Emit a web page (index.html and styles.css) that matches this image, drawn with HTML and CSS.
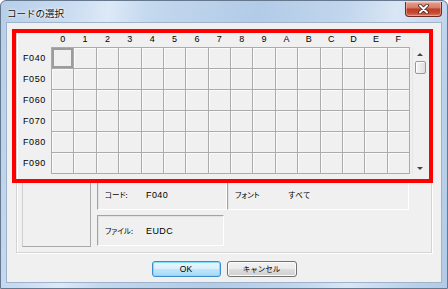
FILE: index.html
```html
<!DOCTYPE html>
<html lang="ja">
<head>
  <meta charset="UTF-8">
  <title>コードの選択</title>
  <link rel="stylesheet" href="styles.css">
</head>
<body>
  <div class="window">
    <div class="titlebar">
      <span class="title">コードの選択</span>
      <button class="close" aria-label="閉じる">
        <svg width="13" height="10" viewBox="0 0 13 10">
          <path d="M3 1.5 L10 8.5 M10 1.5 L3 8.5" stroke="#4a1e18" stroke-width="3.6" stroke-linecap="round"/>
          <path d="M3 1.5 L10 8.5 M10 1.5 L3 8.5" stroke="#fff" stroke-width="2" stroke-linecap="round"/>
        </svg>
      </button>
    </div>

    <div class="client">
      <div class="group">
        <div class="map">
          <div class="labels">
            <div>F040</div>
            <div>F050</div>
            <div>F060</div>
            <div>F070</div>
            <div>F080</div>
            <div>F090</div>
          </div>
          <div class="board">
            <div class="heads">
              <span>0</span><span>1</span><span>2</span><span>3</span>
              <span>4</span><span>5</span><span>6</span><span>7</span>
              <span>8</span><span>9</span><span>A</span><span>B</span>
              <span>C</span><span>D</span><span>E</span><span>F</span>
            </div>
            <div class="cells">
              <span class="cell selected"></span><span class="cell"></span><span class="cell"></span><span class="cell"></span><span class="cell"></span><span class="cell"></span><span class="cell"></span><span class="cell"></span><span class="cell"></span><span class="cell"></span><span class="cell"></span><span class="cell"></span><span class="cell"></span><span class="cell"></span><span class="cell"></span><span class="cell"></span>
              <span class="cell"></span><span class="cell"></span><span class="cell"></span><span class="cell"></span><span class="cell"></span><span class="cell"></span><span class="cell"></span><span class="cell"></span><span class="cell"></span><span class="cell"></span><span class="cell"></span><span class="cell"></span><span class="cell"></span><span class="cell"></span><span class="cell"></span><span class="cell"></span>
              <span class="cell"></span><span class="cell"></span><span class="cell"></span><span class="cell"></span><span class="cell"></span><span class="cell"></span><span class="cell"></span><span class="cell"></span><span class="cell"></span><span class="cell"></span><span class="cell"></span><span class="cell"></span><span class="cell"></span><span class="cell"></span><span class="cell"></span><span class="cell"></span>
              <span class="cell"></span><span class="cell"></span><span class="cell"></span><span class="cell"></span><span class="cell"></span><span class="cell"></span><span class="cell"></span><span class="cell"></span><span class="cell"></span><span class="cell"></span><span class="cell"></span><span class="cell"></span><span class="cell"></span><span class="cell"></span><span class="cell"></span><span class="cell"></span>
              <span class="cell"></span><span class="cell"></span><span class="cell"></span><span class="cell"></span><span class="cell"></span><span class="cell"></span><span class="cell"></span><span class="cell"></span><span class="cell"></span><span class="cell"></span><span class="cell"></span><span class="cell"></span><span class="cell"></span><span class="cell"></span><span class="cell"></span><span class="cell"></span>
              <span class="cell"></span><span class="cell"></span><span class="cell"></span><span class="cell"></span><span class="cell"></span><span class="cell"></span><span class="cell"></span><span class="cell"></span><span class="cell"></span><span class="cell"></span><span class="cell"></span><span class="cell"></span><span class="cell"></span><span class="cell"></span><span class="cell"></span><span class="cell"></span>
            </div>
          </div>
          <div class="scroll">
            <div class="arrow up"></div>
            <div class="thumb"></div>
            <div class="track"></div>
            <div class="arrow down"></div>
          </div>
        </div>

        <div class="info">
          <div class="preview"></div>
          <div class="fields">
            <div class="row">
              <div class="field code"><span class="key">コード:</span><span class="val">F040</span></div>
              <div class="field font"><span class="key wide">フォント</span><span class="val">すべて</span></div>
            </div>
            <div class="field file"><span class="key">ファイル:</span><span class="val">EUDC</span></div>
          </div>
        </div>
      </div>

      <div class="buttons">
        <button class="btn default">OK</button>
        <button class="btn cancel">キャンセル</button>
      </div>

      <!-- annotation frame drawn over the character grid -->
      <div class="highlight"></div>
    </div>
  </div>
</body>
</html>
```

FILE: styles.css
```css
* {
  box-sizing: border-box;
}
body {
  margin: 0;
  font-family: "Liberation Sans", "Noto Sans CJK JP", sans-serif;
  background-color: #fff;
  color: #000;
}
.window {
  width: 448px;
  height: 289px;
  display: flex;
  flex-direction: column;
  border: 1px solid #66788e;
  border-radius: 6px 6px 0 0;
  background: linear-gradient(100deg, #b6cee9 0%, #c9dcf1 14%, #dde9f7 22%, #c4d8ee 30%, #b2cbe7 52%, #c2d6ed 70%, #d9e6f5 80%, #bcd2eb 92%, #b2cae6 100%);
}
.titlebar {
  height: 21px;
  display: flex;
  align-items: flex-start;
  padding-left: 6px;
}
.title {
  font-family: "Noto Sans CJK JP", sans-serif;
  font-size: 9.5px;
  line-height: 20px;
  padding-top: 2px;
  color: #111;
  text-shadow: 0 0 4px #fff, 0 0 2px #fff;
}
.close {
  margin: 1px 5px 0 auto;
  width: 37px;
  height: 15px;
  padding: 0;
  border: 1px solid #6e2a20;
  border-top: none;
  border-radius: 0 0 4px 4px;
  background: linear-gradient(to bottom, #e3a091 0%, #d67a68 42%, #c13c24 50%, #c34a33 78%, #d6806a 100%);
  display: flex;
  align-items: center;
  justify-content: center;
  box-shadow: inset 0 0 0 1px rgba(255, 220, 210, 0.4);
}
.client {
  position: relative;
  flex: 1;
  margin: 0 5px 5px;
  border: 1px solid #9fb4cc;
  background-color: #f0f0f0;
  display: flex;
  flex-direction: column;
  padding: 7px 9px 0;
}
.group {
  height: 223px;
  border: 1px solid #d3d3d3;
  box-shadow: 1px 1px 0 #fff, inset 1px 1px 0 #fff;
}
.map {
  display: flex;
}
.labels {
  width: 34px;
  padding-top: 17px;
  font-size: 9px;
}
.labels div {
  height: 21px;
  line-height: 20px;
  padding-left: 6px;
  letter-spacing: 0.6px;
}
.board {
  width: 359px;
}
.heads {
  display: grid;
  grid-template-columns: repeat(16, 1fr);
  gap: 1px;
  padding: 0 1px;
  height: 16px;
  line-height: 17px;
  font-size: 9px;
  text-align: center;
}
.cells {
  display: grid;
  grid-template-columns: repeat(16, 1fr);
  grid-auto-rows: 20px;
  gap: 1px;
  padding: 1px;
  background-color: #ababab;
}
.cell {
  background-color: #f0f0f0;
  box-shadow: inset 1px 1px 0 #fafafa;
}
.cell.selected {
  box-shadow: inset 0 0 0 2px #9c9c9c;
}
.scroll {
  width: 15px;
  height: 127px;
  margin: 16px 0 0 2px;
  display: flex;
  flex-direction: column;
  align-items: center;
  border-left: 1px solid #e6e6e6;
}
.arrow {
  width: 0;
  height: 0;
  border-left: 3px solid transparent;
  border-right: 3px solid transparent;
}
.arrow.up {
  margin: 6px 0 5px;
  border-bottom: 3px solid #444;
}
.arrow.down {
  margin: 0 0 4px;
  border-top: 3px solid #444;
}
.thumb {
  width: 11px;
  height: 13px;
  border: 1px solid #979797;
  border-radius: 2px;
  background: linear-gradient(to right, #f6f6f6, #dedede);
  box-shadow: inset 1px 1px 0 #fff;
}
.track {
  flex: 1;
}
.info {
  display: flex;
  gap: 6px;
  margin-top: 5px;
  padding-left: 5px;
}
.preview {
  width: 69px;
  height: 68px;
  border: 1px solid #a9a9a9;
  border-left-color: #cfcfcf;
  border-top-color: #cfcfcf;
}
.fields {
  display: flex;
  flex-direction: column;
  gap: 5px;
}
.row {
  display: flex;
}
.field {
  height: 31px;
  display: flex;
  align-items: center;
  padding-left: 7px;
  border: 1px solid;
  border-color: #a3a3a3 #fff #fff #a3a3a3;
  box-shadow: inset 1px 1px 0 #e2e2e2;
  font-size: 9px;
}
.code {
  width: 130px;
}
.font {
  width: 182px;
}
.file {
  width: 127px;
}
.key {
  width: 41px;
  font-family: "Noto Sans CJK JP", sans-serif;
  font-size: 7.5px;
  font-feature-settings: "palt";
}
.key.wide {
  width: 53px;
}
.val {
  font-size: 9px;
  letter-spacing: 0.4px;
}
.font .val {
  font-family: "Noto Sans CJK JP", sans-serif;
  font-size: 7.5px;
}
.buttons {
  display: flex;
  justify-content: center;
  gap: 6px;
  margin-top: 8px;
}
.btn {
  height: 16px;
  padding: 0;
  border: 1px solid #707070;
  border-radius: 3px;
  font-family: "Liberation Sans", "Noto Sans CJK JP", sans-serif;
  font-size: 8.5px;
  line-height: 14px;
  color: #000;
  background: linear-gradient(to bottom, #f2f2f2 0%, #ebebeb 48%, #dddddd 52%, #cfcfcf 100%);
  box-shadow: inset 0 0 0 1px #fcfcfc;
}
.btn.default {
  width: 69px;
  border-color: #3c8ccf;
  background: linear-gradient(to bottom, #eaf6fd 0%, #d9f0fc 48%, #bee6fd 52%, #a7d9f5 100%);
  box-shadow: inset 0 0 0 1px #7fdcfa;
}
.btn.cancel {
  width: 70px;
  font-family: "Noto Sans CJK JP", sans-serif;
  font-size: 7.5px;
}
.highlight {
  position: absolute;
  left: 5px;
  top: 6px;
  width: 421px;
  height: 154px;
  border: 4px solid #ff0000;
}
```
